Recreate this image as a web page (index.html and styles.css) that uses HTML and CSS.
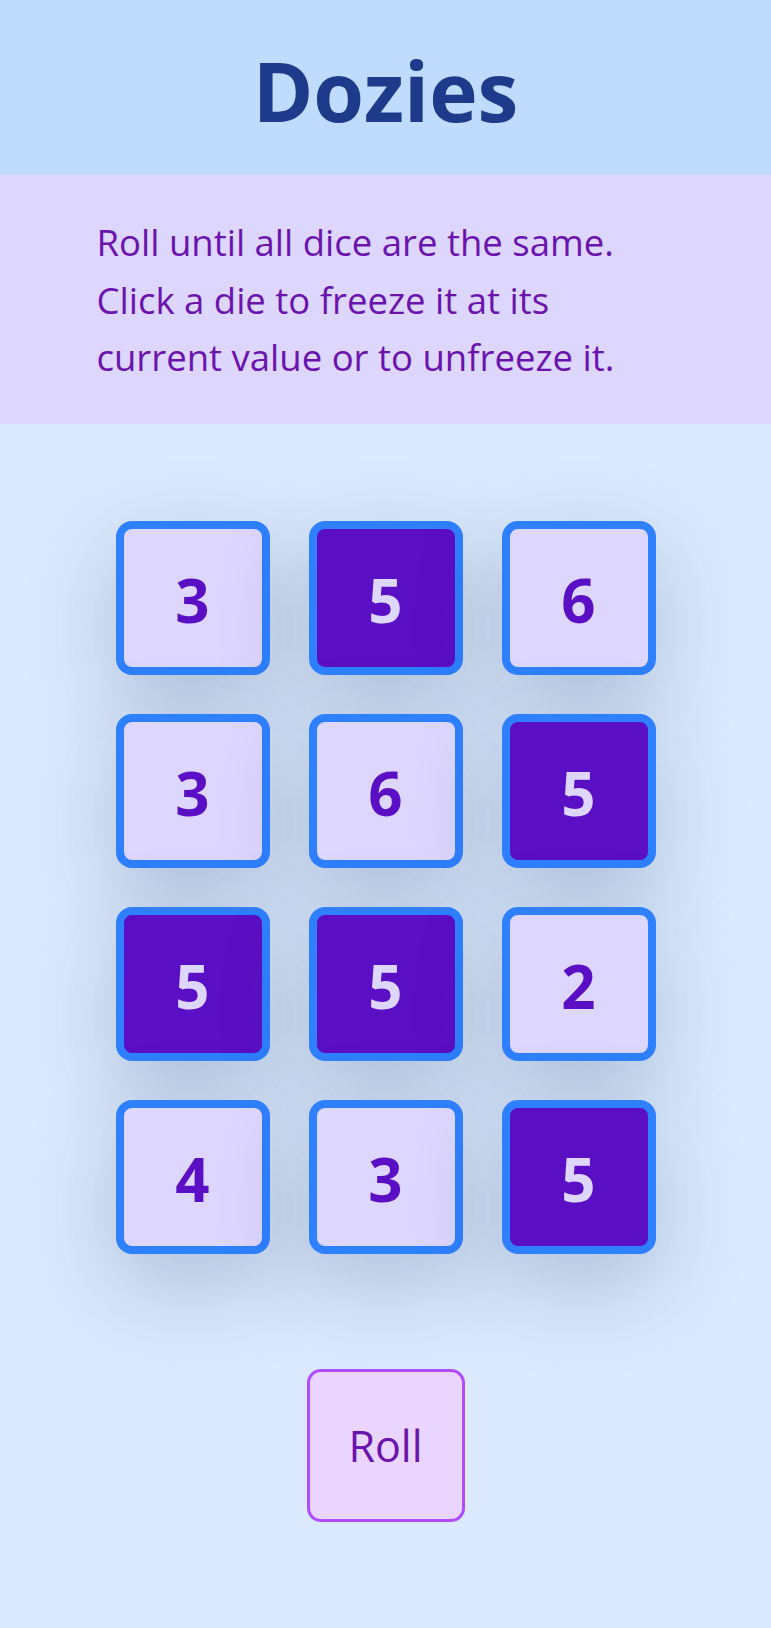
FILE: index.html
```html
<!DOCTYPE html>
<html lang="en">
<head>
<meta charset="utf-8">
<title>Dozies</title>
<link rel="stylesheet" href="styles.css">
</head>
<body>
<header class="top">
  <h1 class="title">Dozies</h1>
</header>
<section class="intro">
  <p class="intro-text">Roll until all dice are the same. Click a die to freeze it at its current value or to unfreeze it.</p>
</section>
<main class="game">
  <div class="board">
    <button class="die">3</button>
    <button class="die frozen">5</button>
    <button class="die">6</button>
    <button class="die">3</button>
    <button class="die">6</button>
    <button class="die frozen">5</button>
    <button class="die frozen">5</button>
    <button class="die frozen">5</button>
    <button class="die">2</button>
    <button class="die">4</button>
    <button class="die">3</button>
    <button class="die frozen">5</button>
  </div>
  <button class="roll">Roll</button>
</main>
</body>
</html>
```
FILE: styles.css
```css
html, body {
  margin: 0;
  padding: 0;
}
body {
  background: #dbeafe;
  font-family: "Open Sans", "Noto Sans", sans-serif;
  min-height: 1628px;
}
.top {
  background: #bfdbfe;
  padding: 48px 0 42px;
}
.title {
  margin: 0;
  text-align: center;
  font-size: 82px;
  line-height: 84px;
  font-weight: 700;
  color: #1e3a8a;
}
.intro {
  background: #ddd6fe;
  padding: 40px 0 37px;
}
.intro-text {
  margin: 0 auto;
  max-width: 578px;
  font-size: 36.5px;
  line-height: 57.5px;
  color: #6b14ad;
}
.game {
  display: flex;
  flex-direction: column;
  align-items: center;
  padding-top: 97px;
}
.board {
  display: grid;
  grid-template-columns: repeat(3, 154px);
  grid-auto-rows: 154px;
  gap: 39px;
}
.die {
  box-sizing: border-box;
  width: 154px;
  height: 154px;
  border: 8px solid #2f80ff;
  border-radius: 16px;
  background: #ddd6fe;
  color: #5b0fc4;
  font-family: "Open Sans", "Noto Sans", sans-serif;
  font-size: 60px;
  font-weight: 700;
  display: flex;
  align-items: center;
  justify-content: center;
  padding: 4px 0 0;
  box-shadow: 0 30px 90px rgba(30, 50, 90, 0.24);
  cursor: pointer;
}
.die.frozen {
  background: #5b0fc4;
  color: #ddd6fe;
}
.roll {
  margin-top: 115px;
  box-sizing: border-box;
  width: 158px;
  height: 153px;
  border: 3px solid #b04cff;
  border-radius: 14px;
  background: #e9d5ff;
  color: #6b14ad;
  font-family: "Open Sans", "Noto Sans", sans-serif;
  font-size: 43px;
  font-weight: 500;
  padding: 0;
  cursor: pointer;
}
```
